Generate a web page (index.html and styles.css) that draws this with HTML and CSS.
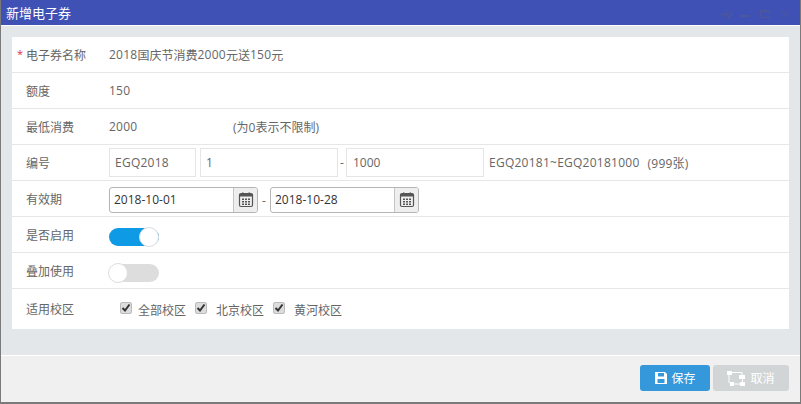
FILE: index.html
```html
<!DOCTYPE html>
<html lang="zh-CN">
<head>
    <meta charset="UTF-8">
    <title>新增电子券</title>
    <link rel="stylesheet" href="styles.css">
</head>
<body>
    <div class="dialog">
        <div class="title-bar">
            <span class="title">新增电子券</span>
            <div class="window-tools">
                <svg width="12" height="10" viewBox="0 0 12 10"><path d="M0 4.500h6M6.500 2.500h5v3.500h-5zM8.500 6v2.500" fill="none" stroke="#4e5899"/></svg>
                <svg width="10" height="10" viewBox="0 0 10 10"><path d="M0 6h9" fill="none" stroke="#4e5899" stroke-width="2"/></svg>
                <svg width="11" height="10" viewBox="0 0 11 10"><path d="M0.500 0.500h9v7h-9zM0.500 2h9" fill="none" stroke="#4e5899"/></svg>
                <svg width="11" height="10" viewBox="0 0 11 10"><path d="M1 0l9 8M10 0L1 8" fill="none" stroke="#4e5899"/></svg>
            </div>
        </div>

        <div class="content">
            <div class="card">
                <div class="row">
                    <label class="field-label required">电子券名称</label>
                    <div class="field"><span class="num">2018</span>国庆节消费<span class="num">2000</span>元送<span class="num">150</span>元</div>
                </div>
                <div class="row">
                    <label class="field-label">额度</label>
                    <div class="field"><span class="num">150</span></div>
                </div>
                <div class="row">
                    <label class="field-label">最低消费</label>
                    <div class="field">
                        <span class="min-value num">2000</span>
                        <span>(为0表示不限制)</span>
                    </div>
                </div>
                <div class="row">
                    <label class="field-label">编号</label>
                    <div class="field">
                        <span class="text-box box-prefix num">EGQ2018</span>
                        <span class="text-box box-start">1</span>
                        <span class="dash">-</span>
                        <span class="text-box box-end">1000</span>
                        <span class="code-range"><span class="num">EGQ20181~EGQ20181000</span></span>
                        <span class="code-count">(<span class="num">999</span>张)</span>
                    </div>
                </div>
                <div class="row">
                    <label class="field-label">有效期</label>
                    <div class="field date-field">
                        <div class="date-input">
                            <span class="date-text">2018-10-01</span>
                            <span class="date-btn">
                                <svg width="16" height="16" viewBox="0 0 16 16"><use href="#calendar"/></svg>
                            </span>
                        </div>
                        <span class="dash">-</span>
                        <div class="date-input">
                            <span class="date-text">2018-10-28</span>
                            <span class="date-btn">
                                <svg width="16" height="16" viewBox="0 0 16 16"><use href="#calendar"/></svg>
                            </span>
                        </div>
                    </div>
                </div>
                <div class="row">
                    <label class="field-label">是否启用</label>
                    <div class="field"><span class="switch on"><i class="knob"></i></span></div>
                </div>
                <div class="row">
                    <label class="field-label">叠加使用</label>
                    <div class="field"><span class="switch"><i class="knob"></i></span></div>
                </div>
                <div class="row row-last">
                    <label class="field-label">适用校区</label>
                    <div class="field campus">
                        <span class="check"><svg width="10" height="10" viewBox="0 0 10 10"><path d="M1.500 5l2.500 2.500L8.500 1.500" fill="none" stroke="#333" stroke-width="2"/></svg></span>
                        <span class="check-text">全部校区</span>
                        <span class="check"><svg width="10" height="10" viewBox="0 0 10 10"><path d="M1.500 5l2.500 2.500L8.500 1.500" fill="none" stroke="#333" stroke-width="2"/></svg></span>
                        <span class="check-text">北京校区</span>
                        <span class="check"><svg width="10" height="10" viewBox="0 0 10 10"><path d="M1.500 5l2.500 2.500L8.500 1.500" fill="none" stroke="#333" stroke-width="2"/></svg></span>
                        <span class="check-text">黄河校区</span>
                    </div>
                </div>
            </div>
        </div>

        <div class="footer">
            <button class="btn btn-save">
                <svg width="14" height="14" viewBox="0 0 14 14"><path fill-rule="evenodd" d="M1 1h10l2 2v10H1zM4 2v3.500h6V2zM3.500 8v4h7V8z" fill="#fff"/></svg>
                保存
            </button>
            <button class="btn btn-cancel">
                <svg width="20" height="15" viewBox="0 0 20 15"><path d="M5 1.500h10v3M2 4v8M7 13h6M15.500 8v3" fill="none" stroke="#fff"/><path d="M0 0h5v4H0zM12 4h6v4h-6zM3 11h4v4H3zM13 11h5v4h-5z" fill="#fff"/></svg>
                取消
            </button>
        </div>
    </div>

    <svg width="0" height="0" class="defs">
        <symbol id="calendar" viewBox="0 0 16 16">
            <path d="M3 1.500h10a1.500 1.500 0 0 1 1.500 1.500v10a1.500 1.500 0 0 1-1.500 1.500H3A1.500 1.500 0 0 1 1.500 13V3A1.500 1.500 0 0 1 3 1.500z" fill="none" stroke="#555" stroke-width="1.200"/>
            <path d="M1.500 2h13v2.500h-13zM4 0.500h1.500v2H4zM10.500 0.500H12v2h-1.500z" fill="#555"/>
            <path d="M4 6.500h2v1.500H4zM7 6.500h2v1.500H7zM10 6.500h2v1.500h-2zM4 9h2v1.500H4zM7 9h2v1.500H7zM10 9h2v1.500h-2zM4 11.500h2V13H4zM7 11.500h2V13H7zM10 11.500h2V13h-2z" fill="#555"/>
        </symbol>
    </svg>
</body>
</html>
```

FILE: styles.css
```css
* {
    box-sizing: border-box;
}
html, body {
    margin: 0;
    height: 100%;
}
body {
    font-family: "Open Sans", "Noto Sans CJK SC", sans-serif;
    font-size: 12px;
    color: #666;
    background-color: #fff;
    overflow: hidden;
}
.defs {
    position: absolute;
}
.dialog {
    height: 404px;
    display: flex;
    flex-direction: column;
    border-left: 1px solid #7a7a7a;
    border-right: 1px solid #7a7a7a;
    border-bottom: 2px solid #7a7a7a;
}
.title-bar {
    height: 26px;
    flex: none;
    display: flex;
    align-items: center;
    justify-content: space-between;
    padding: 0 9px 1px 5px;
    background-color: #3f51b5;
    border-bottom: 1px solid #fff;
    color: #fff;
    font-size: 13px;
}
.window-tools {
    display: flex;
    gap: 9px;
    margin-top: 6px;
}
.window-tools svg {
    display: block;
}
.content {
    flex: 1;
    padding: 11px 11px 0;
    background-color: #e4e7ea;
}
.card {
    background-color: #fff;
}
.row {
    height: 36px;
    display: flex;
    align-items: center;
    border-bottom: 1px solid #e7e7e7;
}
.row-last {
    height: 40px;
    border-bottom: none;
}
.field-label {
    position: relative;
    width: 97px;
    padding-left: 14px;
    flex: none;
}
.required::before {
    content: "*";
    position: absolute;
    left: 5px;
    font-size: 11px;
    color: #d9304f;
}
.field {
    display: flex;
    align-items: center;
}
.num {
    letter-spacing: 0.25px;
}
.min-value {
    width: 124px;
}
.text-box {
    height: 29px;
    display: flex;
    align-items: center;
    padding-left: 5px;
    border: 1px solid #e5e5e5;
}
.box-prefix {
    width: 87px;
    margin-right: 4px;
}
.box-start {
    width: 138px;
}
.box-end {
    width: 138px;
    padding-left: 6px;
}
.dash {
    width: 8px;
    text-align: center;
}
.code-range {
    margin-left: 5px;
}
.code-count {
    margin-left: 8px;
    letter-spacing: 0.2px;
}
.date-field {
    padding-top: 3px;
}
.date-input {
    display: flex;
    height: 26px;
    width: 149px;
    border: 1px solid #b5b5b5;
    border-radius: 3px;
    overflow: hidden;
}
.date-text {
    flex: 1;
    padding-left: 4px;
    line-height: 24px;
    color: #333;
}
.date-btn {
    width: 24px;
    display: flex;
    align-items: center;
    justify-content: center;
    background-color: #eee;
    border-left: 1px solid #c5c5c5;
}
.date-input + .dash {
    width: 12px;
}
.switch {
    position: relative;
    display: block;
    width: 50px;
    height: 18px;
    margin-top: 4px;
    border-radius: 9px;
    background-color: #ddd;
}
.switch.on {
    background-color: #0f9ae6;
}
.knob {
    position: absolute;
    left: -1px;
    top: -1px;
    width: 20px;
    height: 20px;
    border-radius: 50%;
    background-color: #fff;
    border: 1px solid #ddd;
}
.switch.on .knob {
    left: 30px;
}
.campus {
    padding-left: 11px;
}
.check {
    width: 12px;
    height: 12px;
    margin-top: -3px;
    display: flex;
    align-items: center;
    justify-content: center;
    border-radius: 2px;
    background-color: #dcdcdc;
    border: 1px solid #bbb;
}
.check-text {
    margin: 2px 9px 0 9px;
}
.check:first-child + .check-text {
    margin-left: 6px;
}
.footer {
    height: 47px;
    flex: none;
    display: flex;
    align-items: center;
    justify-content: flex-end;
    gap: 3px;
    padding: 0 11px 2px 0;
    background-color: #f0f0f0;
    border-top: 1px solid #fff;
}
.btn {
    height: 26px;
    display: flex;
    align-items: center;
    justify-content: center;
    gap: 3px;
    border: none;
    border-radius: 3px;
    color: #fff;
    font-family: inherit;
    font-size: 12px;
}
.btn-save {
    width: 70px;
    background-color: #3498db;
}
.btn-cancel {
    width: 76px;
    background-color: #d2d5d6;
}
```
